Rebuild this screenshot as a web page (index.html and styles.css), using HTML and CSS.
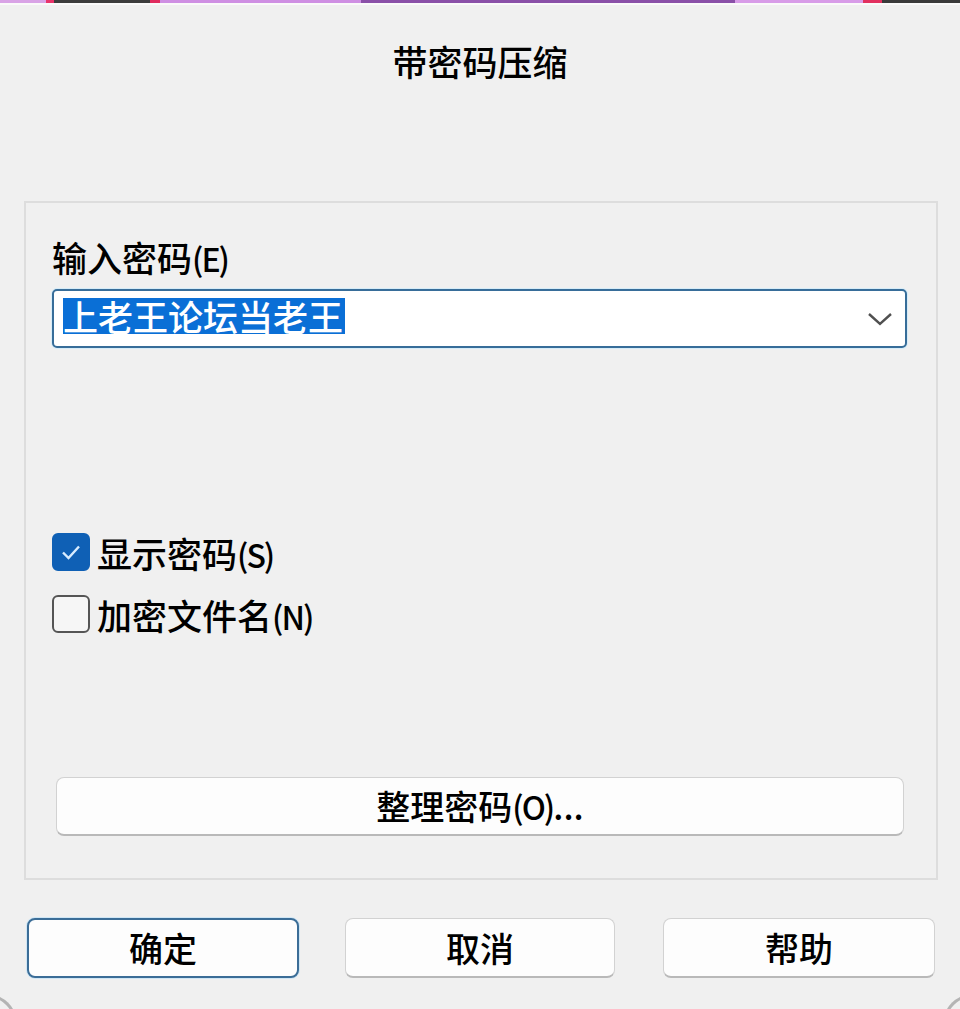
FILE: index.html
```html
<!DOCTYPE html>
<html lang="zh-CN">
<head>
<meta charset="utf-8">
<title>带密码压缩</title>
<link rel="stylesheet" href="styles.css">
</head>
<body>
<div class="dialog">
  <div class="topbar"></div>
  <div class="title">带密码压缩</div>
  <div class="group">
    <div class="label">输入密码<span class="mn">(E)</span></div>
    <div class="combo">
      <span class="sel">上老王论坛当老王</span>
      <svg class="chev" width="26" height="14" viewBox="0 0 26 14"><path d="M2 2 L13 12 L24 2" fill="none" stroke="#505050" stroke-width="2.4"/></svg>
    </div>
    <div class="check first">
      <span class="box on"><svg width="38" height="38" viewBox="0 0 38 38"><path d="M11 19.5 L16.5 25 L27 13.5" fill="none" stroke="#d8ecff" stroke-width="2.4"/></svg></span>
      <span class="ctext">显示密码<span class="mn">(S)</span></span>
    </div>
    <div class="check second">
      <span class="box"></span>
      <span class="ctext">加密文件名<span class="mn">(N)</span></span>
    </div>
    <div class="btn manage">整理密码<span class="mn">(O)</span>...</div>
  </div>
  <div class="actions">
    <div class="btn act default">确定</div>
    <div class="btn act mid">取消</div>
    <div class="btn act last">帮助</div>
  </div>
</div>
</body>
</html>
```
FILE: styles.css
```css
html, body {
  margin: 0;
  padding: 0;
  background: #f0f0f0;
}
body {
  font-family: "Noto Sans CJK SC", "Noto Sans", sans-serif;
  font-weight: 500;
  color: #000;
  width: 960px;
  height: 1009px;
  overflow: hidden;
  position: relative;
}
.dialog {
  display: flex;
  flex-direction: column;
}
.topbar {
  height: 3px;
  border-bottom: 2px solid #fafafa;
  background: linear-gradient(to right,
    #d9a3e6 0, #d9a3e6 46px,
    #e8336a 46px, #e8336a 54px,
    #3c3c3c 54px, #3c3c3c 150px,
    #e02c5e 150px, #e02c5e 160px,
    #cf8fe3 160px, #cf8fe3 361px,
    #8a50a8 361px, #8a50a8 735px,
    #d89ce8 735px, #d89ce8 863px,
    #e2305f 863px, #e2305f 882px,
    #3a3a3a 882px, #3a3a3a 960px);
}
.title {
  margin-top: 36px;
  height: 40px;
  line-height: 40px;
  font-size: 35px;
  text-align: center;
}
.group {
  box-sizing: border-box;
  margin: 120px 0 0 24px;
  width: 914px;
  height: 679px;
  border: 2px solid #dddddd;
  padding: 34px 29px 42px 26px;
  display: flex;
  flex-direction: column;
}
.label {
  font-size: 35px;
  line-height: 40px;
  height: 40px;
  margin-bottom: 12px;
}
.mn {
  letter-spacing: -2px;
  font-size: 32px;
}
.combo {
  box-sizing: border-box;
  height: 59px;
  border: 2px solid #376d99;
  border-radius: 5px;
  background: #ffffff;
  box-shadow: 0 0 0 1px #d6ecf8;
  padding: 7px 0 0 9px;
  display: flex;
  align-items: flex-start;
}
.sel {
  background: #0a6fd6;
  color: #ffffff;
  font-size: 35px;
  line-height: 36px;
  height: 36px;
  padding-right: 2px;
}
.chev {
  margin-left: auto;
  margin-right: 12px;
  margin-top: 14px;
}
.check {
  display: flex;
  align-items: center;
  height: 38px;
}
.check.first {
  margin-top: 185px;
}
.check.second {
  margin-top: 24px;
}
.box {
  box-sizing: border-box;
  width: 38px;
  height: 38px;
  border-radius: 6px;
  border: 2px solid #555555;
  background: #f6f6f6;
  margin-right: 7px;
  display: flex;
}
.box.on {
  background: #0f60b5;
  border-color: #0f60b5;
}
.box.on svg {
  margin: -2px;
}
.ctext {
  font-size: 35px;
  line-height: 40px;
  margin-top: 2px;
}
.btn {
  box-sizing: border-box;
  background: #fdfdfd;
  border: 1.5px solid #d2d2d2;
  border-bottom: 2.5px solid #b9b9b9;
  border-radius: 8px;
  display: flex;
  align-items: center;
  justify-content: center;
  font-size: 34px;
  line-height: 40px;
}
.manage {
  margin: auto 3px 0 4px;
  height: 59px;
}
.actions {
  display: flex;
  margin: 38px 0 0 27px;
  gap: 46px;
}
.act {
  width: 272px;
  height: 60px;
}
.act.mid {
  width: 270px;
  margin-right: 2px;
}
.act.default {
  border: 2px solid #3b6d97;
  box-shadow: 0 0 0 1px #cfe6f5;
}
body::before,
body::after {
  content: "";
  position: absolute;
  width: 40px;
  height: 40px;
  border: 3px solid #b4b4b4;
  bottom: -28px;
}
body::before {
  left: -26px;
  border-radius: 0 30px 0 0;
  border-left: none;
  border-bottom: none;
}
body::after {
  right: -26px;
  border-radius: 30px 0 0 0;
  border-right: none;
  border-bottom: none;
}
```
